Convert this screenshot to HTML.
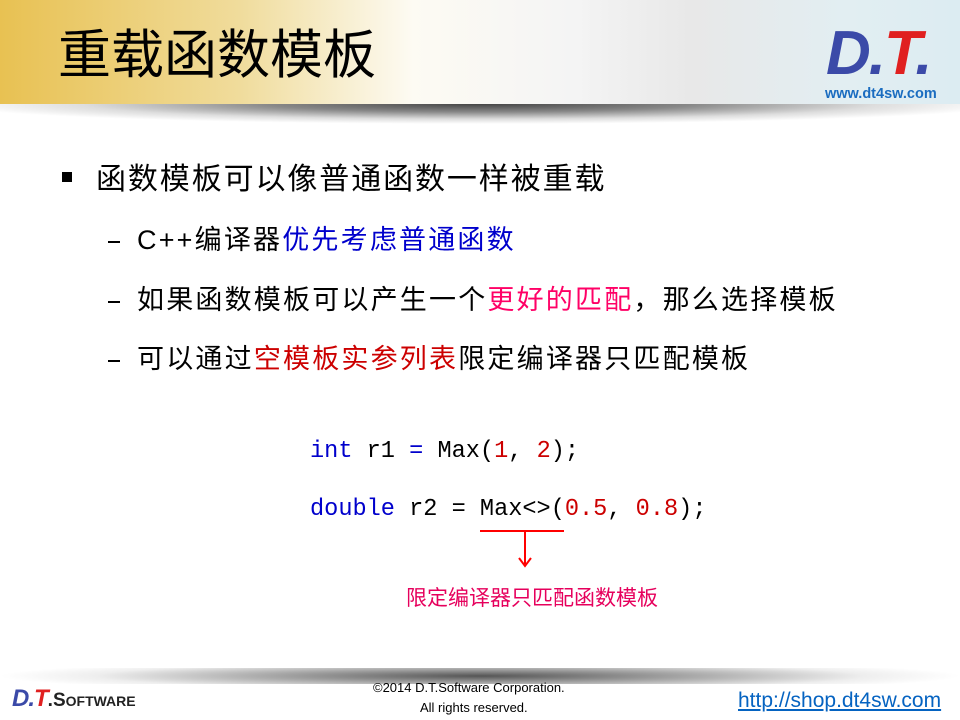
<!DOCTYPE html>
<html><head><meta charset="utf-8"><style>
*{margin:0;padding:0;box-sizing:border-box}
body{width:960px;height:720px;position:relative;background:#fff;overflow:hidden;font-family:"Liberation Sans","Noto Sans CJK SC",sans-serif}
.hdr{position:absolute;left:0;top:0;width:960px;height:104px;background:linear-gradient(90deg,#e8c152 0%,#f0dc9c 25%,#fdfbf3 43%,#f4f4f4 60%,#e8e8e8 72%,#e2eef2 88%,#dcecf2 100%)}
.shadow{position:absolute;left:0;top:104px;width:960px;height:20px;background:radial-gradient(ellipse 55% 100% at 50% 0%,#444 0%,#888 40%,#ddd 75%,#fff 100%)}
.title{position:absolute;left:58px;top:16px;font-size:53px;font-family:"Noto Sans CJK SC",sans-serif;color:#000;line-height:70px}
.abs{position:absolute;white-space:nowrap}
.l1{font-size:30px;letter-spacing:1.9px;font-family:"Liberation Sans","Noto Sans CJK SC",sans-serif;line-height:40px}
.l2{font-size:27px;letter-spacing:2.2px;font-family:"Liberation Sans","Noto Sans CJK SC",sans-serif;line-height:40px}
.code{font-family:"Liberation Mono",monospace;font-size:23.6px;color:#000}
.b{color:#0000cc}.p{color:#ff0066}.r{color:#cc0000}
</style></head><body>
<div class="hdr"></div>
<div class="shadow"></div>
<div class="title">重载函数模板</div>
<div class="abs" style="left:826px;top:18px;font:italic bold 62px 'Liberation Sans',sans-serif;color:#3b4aa8;letter-spacing:-2px">D.<span style="color:#e02020">T</span>.</div>
<div class="abs" style="left:825px;top:86px;font:bold 14.5px 'Liberation Sans',sans-serif;color:#1a6cc0">www.dt4sw.com</div>

<div class="abs" style="left:62px;top:172px;width:10px;height:10px;background:#000"></div>
<div class="abs l1" style="left:96px;top:160px">函数模板可以像普通函数一样被重载</div>
<div class="abs" style="left:108px;top:241px;width:12px;height:2px;background:#000"></div>
<div class="abs l2" style="left:137px;top:220px">C++编译器<span class="b">优先考虑普通函数</span></div>
<div class="abs" style="left:108px;top:301px;width:12px;height:2px;background:#000"></div>
<div class="abs l2" style="left:137px;top:280px">如果函数模板可以产生一个<span class="p">更好的匹配</span>，那么选择模板</div>
<div class="abs" style="left:108px;top:360px;width:12px;height:2px;background:#000"></div>
<div class="abs l2" style="left:137px;top:339px">可以通过<span class="r">空模板实参列表</span>限定编译器只匹配模板</div>

<div class="abs code" style="left:310px;top:438px"><span class="b">int</span> r1 <span class="b">=</span> Max(<span class="r">1</span>, <span class="r">2</span>);</div>
<div class="abs code" style="left:310px;top:496px"><span class="b">double</span> r2 = Max&lt;&gt;(<span class="r">0.5</span>, <span class="r">0.8</span>);</div>
<div class="abs" style="left:480px;top:530px;width:84px;height:2px;background:#f00"></div>
<div class="abs" style="left:524px;top:530px;width:2px;height:34px;background:#f00"></div>
<svg class="abs" style="left:517px;top:555px" width="16" height="14"><path d="M2 3 L8 11 L14 3" stroke="#f00" stroke-width="2" fill="none"/></svg>
<div class="abs" style="left:406px;top:582px;font-size:21px;font-family:'Noto Sans CJK SC',sans-serif;color:#e6005c;line-height:30px">限定编译器只匹配函数模板</div>

<div class="shadow" style="top:668px;height:16px;background:radial-gradient(ellipse 50% 100% at 50% 50%,#555 0%,#aaa 45%,#eee 80%,#fff 100%)"></div>
<div class="abs" style="left:12px;top:685px;font:italic bold 24px 'Liberation Sans',sans-serif;color:#3b4aa8;letter-spacing:-1px">D.<span style="color:#e02020">T</span><span style="font-style:normal;color:#222;font-size:19px;letter-spacing:0">.S<span style="font-size:14px">OFTWARE</span></span></div>
<div class="abs" style="left:373px;top:680px;font-size:13px;color:#000">©2014 D.T.Software Corporation.</div>
<div class="abs" style="left:420px;top:700px;font-size:13px;color:#000">All rights reserved.</div>
<div class="abs" style="left:738px;top:689px;font-size:21px;color:#0563c1;text-decoration:underline">http://shop.dt4sw.com</div>
</body></html>
